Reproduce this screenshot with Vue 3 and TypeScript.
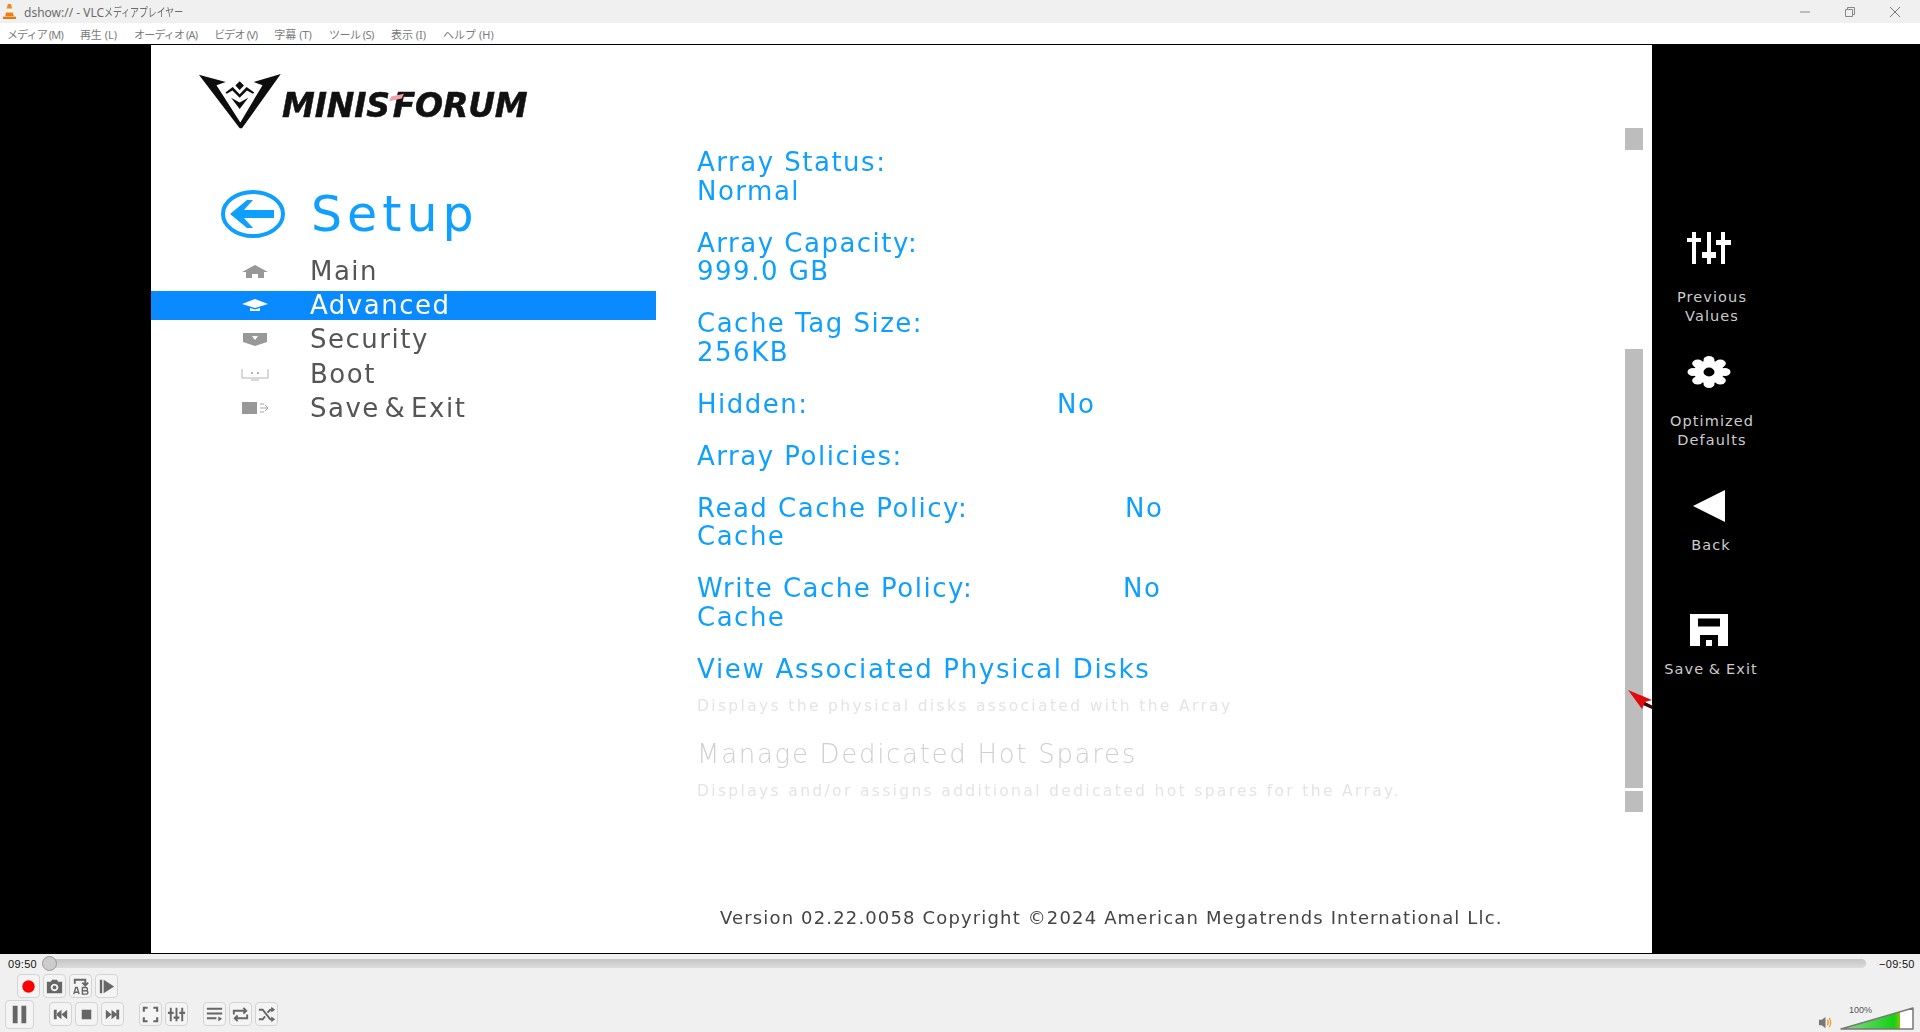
<script setup lang="ts">
const menus = [
  { label: 'メディア (M)', cls: 'n1' },
  { label: '再生 (L)', cls: 'n0' },
  { label: 'オーディオ (A)', cls: 'n1' },
  { label: 'ビデオ (V)', cls: 'n1' },
  { label: '字幕 (T)', cls: 'n0' },
  { label: 'ツール (S)', cls: 'n2' },
  { label: '表示 (I)', cls: 'n0' },
  { label: 'ヘルプ (H)', cls: 'n0' },
]
const navItems = [
  { key: 'main', label: 'Main', active: false },
  { key: 'advanced', label: 'Advanced', active: true },
  { key: 'security', label: 'Security', active: false },
  { key: 'boot', label: 'Boot', active: false },
  { key: 'exit', label: 'Save & Exit', active: false },
]
const gearLobes = [0, 45, 90, 135, 180, 225, 270, 315].map((deg) => {
  const r = (deg * Math.PI) / 180
  return { deg, cx: 16 * Math.cos(r), cy: 12 * Math.sin(r) }
})
</script>

<template>
  <div class="window">
    <header class="titlebar">
      <svg class="cone" viewBox="0 0 16 18" width="15" height="17">
        <path d="M6.200 1h3.400l1.200 5H5z" fill="#f08a1d" />
        <path d="M5 6h5.800l.8 4H4.200z" fill="#f3f3f3" />
        <path d="M4.200 10h7.400l1 4H3.400z" fill="#ee7f12" />
        <path d="M1 14.500h14V17H1z" fill="#e57710" />
      </svg>
      <span class="title">dshow:// - VLC<span class="kana">メディアプレイヤー</span></span>
      <div class="winctl">
        <svg viewBox="0 0 12 12" width="12" height="12"><path d="M1 6h10" stroke="#888" fill="none" /></svg>
        <svg viewBox="0 0 12 12" width="12" height="12"><path d="M1.500 3.500h7v7h-7zM3.500 3.500v-2h7v7h-2" stroke="#888" fill="none" /></svg>
        <svg viewBox="0 0 12 12" width="12" height="12"><path d="M1 1l10 10M11 1L1 11" stroke="#777" fill="none" /></svg>
      </div>
    </header>
    <nav class="menubar">
      <span v-for="m in menus" :key="m.label" :class="m.cls">{{ m.label }}</span>
    </nav>

    <main class="video">
      <section class="bios">
        <div class="bios-body">
          <aside class="side">
            <div class="logo">
              <svg class="emblem" viewBox="20 20 255 175" width="85" height="58">
                <path fill="#0d0d0d" d="M25 28L106 50 78 60 150 172 217 60 190 50 272 26 155 190H148z" />
                <path fill="#0d0d0d" d="M148 48l13 13-13 13-13-13z" />
                <path fill="#0d0d0d" d="M105 82l22-17 21 22 21-22 23 17-4 4-18-10-22 22-22-22-17 10z" />
                <path fill="#0d0d0d" d="M122 98l26 14 26-14-26 34z" />
              </svg>
              <span class="brand">MINIS<i class="gap"></i>FORUM</span>
            </div>
            <div class="setup">
              <svg viewBox="0 0 66 50" width="66" height="50">
                <ellipse cx="33" cy="25" rx="30" ry="22" fill="none" stroke="#0f9fff" stroke-width="4" />
                <path d="M10 25L27 11h6l-9 10h30v8H24l9 10h-6z" fill="#0f9fff" />
              </svg>
              <span>Setup</span>
            </div>
            <ul class="nav">
              <li v-for="item in navItems" :key="item.key" :class="{ active: item.active }">
                <span class="nav-ic">
                  <svg v-if="item.key === 'main'" viewBox="0 0 28 14" width="28" height="14"><path d="M1 8L14 1l13 7h-4v6h-6v-4h-6v4H5V8z" fill="#989898" /></svg>
                  <svg v-else-if="item.key === 'advanced'" viewBox="0 0 28 14" width="28" height="14"><path d="M1 6L14 1l13 5-13 4zM9 10l5 1.500 5-1.500v3H9z" fill="#fff" /></svg>
                  <svg v-else-if="item.key === 'security'" viewBox="0 0 28 14" width="28" height="14"><path d="M2 1h24v9l-12 4L2 10z" fill="#989898" /><path d="M11 4h6l-3 4z" fill="#fff" /></svg>
                  <svg v-else-if="item.key === 'boot'" viewBox="0 0 28 14" width="28" height="14"><path d="M1 2v9h26V2M10 13h8" stroke="#b4b4b4" stroke-width="1" fill="none" /><path d="M10 5h2v2h-2zM16 5h2v2h-2z" fill="#b4b4b4" /></svg>
                  <svg v-else viewBox="0 0 28 14" width="28" height="14"><path d="M1 1h15v12H1z" fill="#989898" /><path d="M19 7h8M24 4l3 3-3 3M19 3h4M19 11h4" stroke="#a4a4a4" fill="none" /></svg>
                </span>
                <span>{{ item.label }}</span>
              </li>
            </ul>
          </aside>

          <div class="content">
            <div class="group"><div>Array Status:</div><div>Normal</div></div>
            <div class="group"><div>Array Capacity:</div><div>999.0 GB</div></div>
            <div class="group"><div>Cache Tag Size:</div><div>256KB</div></div>
            <div class="group row"><div class="k-hidden">Hidden:</div><div>No</div></div>
            <div class="group"><div>Array Policies:</div></div>
            <div class="group"><div class="row"><div class="k-read">Read Cache Policy:</div><div>No</div></div><div>Cache</div></div>
            <div class="group"><div class="row"><div class="k-write">Write Cache Policy:</div><div>No</div></div><div>Cache</div></div>
            <div class="link">View Associated Physical Disks</div>
            <div class="desc">Displays the physical disks associated with the Array</div>
            <div class="link off">Manage Dedicated Hot Spares</div>
            <div class="desc">Displays and/or assigns additional dedicated hot spares for the Array.</div>
          </div>

          <div class="scroll">
            <div class="sb-top"></div>
            <div class="sb-thumb"></div>
            <div class="sb-end"></div>
          </div>
        </div>
        <footer class="version">Version 02.22.0058 Copyright ©2024 American Megatrends International Llc.</footer>
      </section>

      <aside class="actions">
        <div class="act">
          <svg class="act-ic" viewBox="0 0 44 32" width="44" height="32">
            <path d="M7 0v32M22 0v32M36 0v32" stroke="#fff" stroke-width="4" />
            <path d="M0 6h14v4H0zM15 20h14v6H15zM29 8h15v5H29z" fill="#fff" />
          </svg>
          <div class="act-l">Previous<br />Values</div>
        </div>
        <div class="act">
          <svg class="act-ic" viewBox="-22 -16 44 32" width="44" height="32">
            <ellipse cx="0" cy="0" rx="15" ry="11.500" fill="#fff" />
            <ellipse v-for="l in gearLobes" :key="l.deg" :cx="l.cx" :cy="l.cy" rx="5.500" ry="4" fill="#fff" />
            <ellipse cx="0" cy="0" rx="5.500" ry="4.400" fill="#000" />
          </svg>
          <div class="act-l">Optimized<br />Defaults</div>
        </div>
        <div class="act low">
          <svg class="act-ic" viewBox="0 0 44 32" width="44" height="32"><path d="M6 16L38 0v32z" fill="#fff" /></svg>
          <div class="act-l">Back</div>
        </div>
        <div class="act low">
          <svg class="act-ic" viewBox="0 0 44 32" width="44" height="32">
            <path fill-rule="evenodd" d="M3 0h38v32H3zM11 4.500v8h22v-8zM13 21v11h18V21z" fill="#fff" />
            <path d="M19 26h6v6h-6z" fill="#fff" />
          </svg>
          <div class="act-l">Save &amp; Exit</div>
        </div>
      </aside>

      <svg class="cursor" viewBox="0 0 26 20" width="26" height="20">
        <path d="M15 11l10 5-1 3-9-4z" fill="#3a0a0a" />
        <path d="M0 0L24 10 17 12 14 19z" fill="#e00c0c" />
      </svg>
    </main>

    <footer class="player">
      <div class="seek">
        <span class="t">09:50</span>
        <div class="track"><i class="knob"></i></div>
        <span class="t end">−09:50</span>
      </div>
      <div class="ctl-wrap">
        <div class="ctl-left">
          <div class="row-a">
            <button class="b"><svg viewBox="0 0 22 22"><circle cx="11" cy="11" r="6.500" fill="#f00" /></svg></button>
            <button class="b"><svg viewBox="0 0 22 22"><path fill-rule="evenodd" d="M3 6h4l1.500-2h5L15 6h4v12H3zM11 8a4 4 0 1 0 .01 0z" fill="#666" /><circle cx="11" cy="12" r="2" fill="#666" /></svg></button>
            <button class="b"><svg viewBox="0 0 22 22"><path d="M5 8V4h11v5M13 7l3 3 3-3" stroke="#666" stroke-width="2" fill="none" /><path d="M4 19l2-7h1.500l2 7M5 17h3.500M13 12h3.500a1.500 1.500 0 0 1 0 3.500H13h4a1.500 1.500 0 0 1 0 3.500h-4z" stroke="#666" stroke-width="1.500" fill="none" /></svg></button>
            <button class="b"><svg viewBox="0 0 22 22"><path d="M4 4h2.500v14H4zM8 4l11 7-11 7z" fill="#666" /></svg></button>
          </div>
          <div class="row-b">
            <button class="b big"><svg viewBox="0 0 28 28"><path d="M7 5h5v18H7zM16 5h5v18h-5z" fill="#666" /></svg></button>
            <div class="cluster">
              <button class="b"><svg viewBox="0 0 22 22"><path d="M4 6h3v10H4zM18 6l-6 5 6 5zM12 6l-6 5 6 5z" fill="#666" /></svg></button>
              <button class="b"><svg viewBox="0 0 22 22"><path d="M6 6h10v10H6z" fill="#666" /></svg></button>
              <button class="b"><svg viewBox="0 0 22 22"><path d="M15 6h3v10h-3zM4 6l6 5-6 5zM10 6l6 5-6 5z" fill="#666" /></svg></button>
            </div>
            <div class="cluster">
              <button class="b"><svg viewBox="0 0 22 22"><path d="M4 8V4h4M14 4h4v4M18 14v4h-4M8 18H4v-4" stroke="#666" stroke-width="2.200" fill="none" /></svg></button>
              <button class="b"><svg viewBox="0 0 22 22"><path d="M5 4v14M11 4v14M17 4v14" stroke="#666" stroke-width="2" /><path d="M2 8h6v2.500H2zM8 13h6v2.500H8zM14 8h6v2.500h-6z" fill="#666" /></svg></button>
            </div>
            <div class="cluster">
              <button class="b"><svg viewBox="0 0 22 22"><path d="M3 5h16M3 10h16M3 15h10" stroke="#666" stroke-width="2" /><path d="M15 13l4 2.500-4 2.500z" fill="#666" /></svg></button>
              <button class="b"><svg viewBox="0 0 22 22"><path d="M4 11V7h13M14 4l3 3-3 3M18 11v4H5M8 12l-3 3 3 3" stroke="#666" stroke-width="2" fill="none" /></svg></button>
              <button class="b"><svg viewBox="0 0 22 22"><path d="M3 6h4l8 10h3M3 16h4l2.500-3M12 9l3-3h3" stroke="#666" stroke-width="2" fill="none" /><path d="M16 3l4 3-4 3zM16 13l4 3-4 3z" fill="#666" /></svg></button>
            </div>
          </div>
        </div>
        <div class="volume">
          <svg viewBox="0 0 16 16" width="15" height="15"><path d="M1 5h3l4-3v12l-4-3H1z" fill="#777" /><path d="M10 5q2 3 0 6M12 3q3 5 0 10" stroke="#f39a1e" stroke-width="1.300" fill="none" /></svg>
          <div class="vol-box">
            <span class="pct">100%</span>
            <svg viewBox="0 0 74 23" width="74" height="23">
              <defs>
                <linearGradient id="vol" x1="0" x2="1" y1="0" y2="0">
                  <stop offset="0" stop-color="#8ed98e" />
                  <stop offset=".9" stop-color="#14d014" />
                  <stop offset="1" stop-color="#84c400" />
                </linearGradient>
              </defs>
              <path d="M1 22L73 1v21z" fill="#fff" />
              <path d="M1 22L60 5v17z" fill="url(#vol)" />
              <path d="M1 22L73 1v21z" fill="none" stroke="#777" stroke-width="1.500" stroke-linejoin="round" />
            </svg>
          </div>
        </div>
      </div>
    </footer>
  </div>
</template>

<style>
html, body { margin: 0; padding: 0; background: #000; }
</style>

<style scoped>
.window { width: 1920px; height: 1032px; display: flex; flex-direction: column; overflow: hidden; background: #000; font-family: "DejaVu Sans", "Noto Sans CJK JP", sans-serif; }
.titlebar { height: 23px; background: #f0f0f0; display: flex; align-items: center; padding-left: 2px; box-sizing: border-box; }
.cone { margin-right: 7px; }
.title { font-size: 12px; color: #6c6c6c; font-family: "Noto Sans", "Noto Sans CJK JP", sans-serif; }
.kana { display: inline-block; transform: scaleX(.74); transform-origin: left center; margin-right: -28px; }
.winctl { margin-left: auto; display: flex; gap: 33px; padding-right: 19px; }
.menubar { height: 21px; background: #fff; display: flex; gap: 17px; align-items: center; padding-left: 7px; font-size: 11px; color: #7a7a7a; box-sizing: border-box; font-family: "Noto Sans", "Noto Sans CJK JP", sans-serif; }
.n1 { letter-spacing: -.85px; }
.n2 { letter-spacing: -.5px; }
.video { height: 909px; margin-top: 1px; display: flex; padding-left: 151px; position: relative; }
.bios { width: 1501px; background: #fff; display: flex; flex-direction: column; filter: blur(.4px); }
.bios-body { height: 861px; display: flex; }
.side { width: 505px; flex: none; }
.logo { display: flex; align-items: flex-end; margin: 27px 0 0 46px; height: 58px; }
.brand { font-family: "DejaVu Sans", sans-serif; font-weight: 700; font-style: italic; font-size: 33px; color: #111; margin: 0 0 7px 0; line-height: 34px; letter-spacing: -.2px; -webkit-text-stroke: .5px #111; }
.gap { display: inline-block; width: 3px; position: relative; }
.gap::after { content: ""; position: absolute; left: 1px; top: -22px; width: 11px; height: 5px; background: #f4a0a8; transform: skewX(-35deg) rotate(-14deg); }
.setup { display: flex; align-items: center; margin: 53px 0 0 69px; height: 62px; color: #0f9fff; font-size: 49px; letter-spacing: 5px; gap: 25px; }
.nav { list-style: none; margin: 9px 0 0; padding: 0; font-size: 26px; letter-spacing: 1.500px; word-spacing: -5px; color: #555; }
.nav li { height: 34.300px; display: flex; align-items: center; padding-left: 90px; }
.nav li.active { background: #0a8aff; color: #fff; height: 29px; margin: 2.500px 0; }
.nav-ic { width: 69px; display: flex; }
.content { flex: 1; padding: 103px 0 0 41px; font-size: 26px; line-height: 28.500px; color: #0f9fff; letter-spacing: 1.500px; }
.group { margin-bottom: 23.500px; }
.row { display: flex; }
.k-hidden { width: 360px; }
.k-read { width: 428px; }
.k-write { width: 426px; }
.link { font-size: 26px; letter-spacing: 1.700px; line-height: 30px; margin-top: -1px; }
.link.off { color: #d0d0d0; margin-top: 22px; font-weight: 300; }
.desc { font-size: 15.500px; letter-spacing: 2.350px; color: #e4e4e4; line-height: 22px; margin-top: 11px; white-space: nowrap; }
.scroll { width: 18px; margin-right: 9px; flex: none; display: flex; flex-direction: column; }
.sb-top { height: 22px; margin-top: 83px; background: #bdbdbd; }
.sb-thumb { height: 439px; margin-top: 199px; background: #bdbdbd; }
.sb-end { height: 21px; margin-top: 3px; background: #bdbdbd; }
.version { font-size: 18px; letter-spacing: 1.150px; color: #444; line-height: 24px; padding-left: 569px; white-space: nowrap; }
.actions { padding-top: 187px; color: #ccc; width: 118px; }
.act { height: 124px; display: flex; flex-direction: column; align-items: center; }
.act-ic { flex: none; margin-right: 4px; }
.act-l { margin: 24px 0 0 2px; font-size: 14.500px; line-height: 19px; letter-spacing: 1.100px; word-spacing: -1px; text-align: center; white-space: nowrap; }
.act.low .act-ic { margin-top: 10px; }
.act.low .act-l { margin-top: 14px; margin-left: 0; }
.cursor { position: absolute; left: 1628px; top: 645px; }
.player { flex: 1; background: #f0f0f0; display: flex; flex-direction: column; margin-top: -1px; position: relative; border-top: 1px solid #000; }
.seek { height: 19px; display: flex; align-items: center; padding: 0 8px; gap: 10px; }
.t { font-size: 11px; color: #111; font-family: "Liberation Sans", sans-serif; letter-spacing: .3px; width: 27px; }
.t.end { width: 33px; }
.track { flex: 1; height: 9px; border-radius: 5px; background: linear-gradient(#c4c4c4, #dcdcdc); position: relative; margin-right: 3px; }
.knob { position: absolute; left: -3px; top: -3px; width: 15px; height: 15px; border-radius: 50%; background: #ccc; border: 1px solid #999; box-sizing: border-box; }
.ctl-wrap { flex: 1; display: flex; justify-content: space-between; }
.ctl-left { display: flex; flex-direction: column; }
.row-a { display: flex; gap: 3px; padding: 1px 0 0 17px; height: 26px; box-sizing: border-box; }
.row-b { display: flex; align-items: center; padding-left: 5px; height: 30px; }
.cluster { display: flex; gap: 3px; margin-left: 15px; }
.b { width: 23px; height: 24px; padding: 0; border: 1px solid #d4d4d4; border-radius: 4px; background: #f4f4f4; display: flex; align-items: center; justify-content: center; box-sizing: border-box; }
.b svg { width: 21px; height: 21px; }
.b.big { width: 29px; height: 29px; }
.b.big svg { width: 27px; height: 27px; }
.volume { display: flex; align-items: flex-end; gap: 7px; padding: 0 6px 2px 0; }
.vol-box { position: relative; height: 23px; }
.pct { position: absolute; left: 9px; top: -2px; font-size: 9px; color: #555; font-family: "Liberation Sans", sans-serif; }
</style>
